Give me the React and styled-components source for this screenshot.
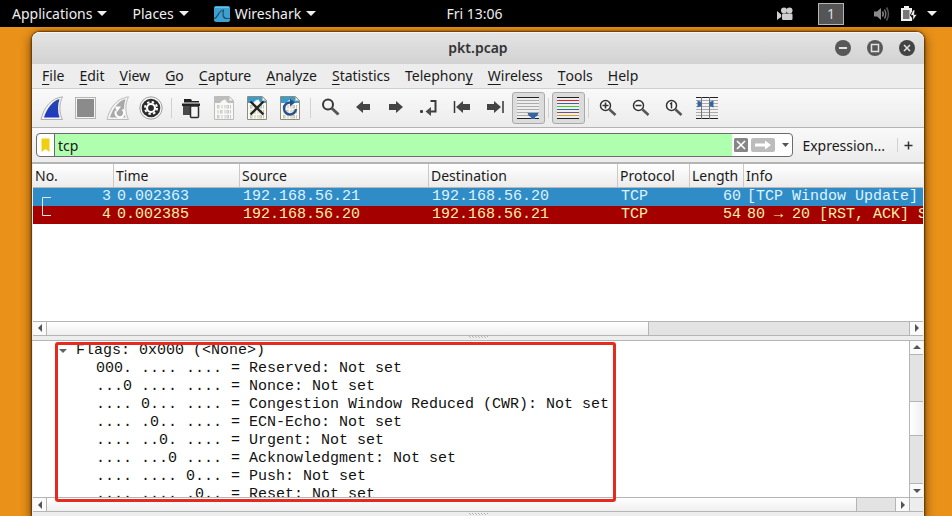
import React from "react";
import styled, { createGlobalStyle, css } from "styled-components";

const ui = `"Noto Sans", "Open Sans", sans-serif`;
const mono = `"Liberation Mono", monospace`;

const Global = createGlobalStyle`
  *, *::before, *::after { box-sizing: border-box; }
  body { margin: 0; background: #e99119; font-family: ${ui}; font-size: 14px; color: #1a1a1a; }
  button, input { font: inherit; color: inherit; }
`;

/* ---------- desktop ---------- */

const Desktop = styled.div`
  display: flex;
  flex-direction: column;
  height: 100vh;
  overflow: hidden;
`;

const PlainButton = styled.button.attrs({ type: "button" })`
  display: flex;
  align-items: center;
  justify-content: center;
  padding: 0;
  border: 0;
  background: none;
`;

const TopBar = styled.header`
  display: grid;
  grid-template-columns: 1fr auto 1fr;
  align-items: center;
  flex: none;
  height: 27px;
  padding: 0 15px 0 12px;
  background: #000;
  color: #eee;
  position: relative;
  z-index: 1;
`;

const TopMenus = styled.nav`
  display: flex;
  align-items: center;
  gap: 25px;
`;

const TopMenu = styled(PlainButton)`
  gap: 5px;
  line-height: 26px;
`;

const Clock = styled.time`
  line-height: 26px;
`;

const Tray = styled.div`
  display: flex;
  align-items: center;
  justify-content: flex-end;
`;

const Workspace = styled(PlainButton)`
  width: 26px;
  height: 22px;
  margin: 0 29px 0 24px;
  border: 1px solid #b4b4b4;
  background: #555;
  color: #ddd;
`;

const TrayIcon = styled.span`
  display: flex;
  margin-right: ${(p) => p.$gap || 0}px;
`;

/* ---------- window ---------- */

const Window = styled.main`
  display: flex;
  flex-direction: column;
  flex: 1;
  min-height: 0;
  margin: 5px 28px 0 32px;
  border-radius: 8px 8px 0 0;
  background: #ededed;
  box-shadow: 0 0 2px 1px rgba(50, 25, 0, 0.7), 0 3px 10px 2px rgba(70, 35, 0, 0.6);
`;

const TitleBar = styled.div`
  display: grid;
  grid-template-columns: 1fr auto 1fr;
  align-items: center;
  flex: none;
  height: 32px;
  padding: 0 9px;
  border-radius: 8px 8px 0 0;
  background: linear-gradient(#e4e4e4, #d2d2d2);
  box-shadow: inset 0 1px #f4f4f4;
`;

const Title = styled.h1`
  grid-column: 2;
  margin: 0;
  font-size: 14px;
  font-weight: 600;
  line-height: 30px;
  color: #333;
`;

const WindowButtons = styled.div`
  display: flex;
  justify-content: flex-end;
  gap: 16px;
`;

const MenuBar = styled.nav`
  display: flex;
  flex: none;
  height: 25px;
  padding: 0 3px;
  border-bottom: 1px solid #cfcfcf;
`;

const MenuItem = styled(PlainButton)`
  padding: 0 8px 0 7px;
  line-height: 24px;
`;

const Mnemonic = styled.span`
  text-decoration: underline;
  text-decoration-thickness: 1px;
  text-underline-offset: 3px;
`;

const ToolBar = styled.div`
  display: flex;
  align-items: center;
  flex: none;
  height: 38px;
  padding: 0 4px 0;
  background: linear-gradient(#f9f9f9, #ececec);
`;

const ToolButton = styled(PlainButton)`
  width: 33px;
  height: 32px;
  ${(p) =>
    p.$pressed &&
    css`
      border: 1px solid #aaa;
      border-radius: 3px;
      background: #dcdcdc;
    `}
`;

const Separator = styled.span`
  flex: none;
  width: 1px;
  height: ${(p) => p.$tall || 20}px;
  margin: 0 3px;
  background: #d2d2d2;
`;

const FilterBar = styled.form`
  display: flex;
  align-items: center;
  flex: none;
  height: 37px;
  padding: 0 9px 0 4px;
  border-top: 1px solid #b4b4b4;
  border-bottom: 2px solid #b4b4b4;
  background: linear-gradient(#f9f9f9, #ececec);
`;

const FilterBox = styled.div`
  display: flex;
  flex: 1;
  height: 24px;
  border: 1px solid #6c6c6c;
  border-radius: 4px;
  background: #fff;
  overflow: hidden;
`;

const Bookmark = styled(PlainButton)`
  width: 18px;
  border-right: 1px solid #6c6c6c;
`;

const FilterInput = styled.input`
  flex: 1;
  min-width: 0;
  padding: 0 3px;
  border: 0;
  outline: 0;
  background: #afffaf;
`;

const FilterActions = styled.div`
  display: flex;
  align-items: center;
  gap: 3px;
  padding-left: 2px;
`;

const CaretButton = styled(PlainButton)`
  width: 14px;
  height: 16px;
`;

const Expression = styled(PlainButton)`
  padding: 0 9px;
`;

/* ---------- packet list ---------- */

const Pane = styled.section`
  display: flex;
  flex-direction: column;
  flex: 1 1 0;
  min-height: 0;
  margin: 0 1px;
  background: #fff;
  position: relative;
`;

const TableArea = styled.div`
  flex: 1;
  min-height: 0;
  overflow: hidden;
`;

const PacketTable = styled.table`
  width: 100%;
  table-layout: fixed;
  border-collapse: separate;
  border-spacing: 0;
`;

const Col = styled.col`
  width: ${(p) => (p.$width ? `${p.$width}px` : "auto")};
`;

const HeadCell = styled.th`
  height: 24px;
  padding: 0 2px;
  border-bottom: 1px solid #b9b9b9;
  background: linear-gradient(#fff, #ececec);
  box-shadow: ${(p) => (p.$last ? "none" : "inset -1px 0 #c9c9c9")};
  font-weight: 400;
  line-height: 22px;
  text-align: left;
  white-space: nowrap;
`;

const PacketRow = styled.tr`
  background: ${(p) => (p.$selected ? "#308cc6" : "#a40000")};
  color: ${(p) => (p.$selected ? "#dff4ff" : "#fbf0a8")};
`;

const Cell = styled.td`
  height: 18px;
  padding: 0 3px;
  font: 15px/18px ${mono};
  text-align: ${(p) => (p.$right ? "right" : "left")};
  white-space: nowrap;
  overflow: hidden;
`;

const NumberBox = styled.div`
  display: flex;
  justify-content: space-between;
  height: 18px;
  padding-left: 6px;
`;

/* ---------- scroll bars and splitters ---------- */

const ScrollRow = styled.div`
  display: flex;
  flex: none;
  flex-direction: ${(p) => (p.$vertical ? "column" : "row")};
  ${(p) =>
    p.$vertical
      ? css`
          width: 14px;
          border-left: 1px solid #b5b5b5;
        `
      : css`
          height: 15px;
          border-top: 1px solid #b5b5b5;
          border-bottom: 1px solid #b5b5b5;
        `}
`;

const ScrollButton = styled(PlainButton)`
  flex: none;
  width: 13px;
  height: 13px;
  background: #fafafa;
`;

const Track = styled.div`
  flex: ${(p) => p.$size} 1 0;
  background: #e3e3e3;
`;

const Thumb = styled.div`
  flex: ${(p) => p.$size} 1 0;
  border: 0 solid #b5b5b5;
  border-width: ${(p) => (p.$vertical ? "1px 0" : "0 1px")};
  background: linear-gradient(${(p) => (p.$vertical ? "to right" : "to bottom")}, #fff, #efefef);
`;

const Rule = styled.div`
  flex: none;
  background: #b5b5b5;
  ${(p) => (p.$vertical ? "height: 1px;" : "width: 1px;")}
`;

const Corner = styled.div`
  flex: none;
  width: 13px;
  background: #ededed;
`;

const Splitter = styled.div`
  display: flex;
  align-items: center;
  justify-content: center;
  flex: none;
  height: ${(p) => p.$height}px;
  background: #ededed;
  ${(p) => p.$line && "border-bottom: 1px solid #b5b5b5;"}
`;

/* ---------- details ---------- */

const DetailsBody = styled.div`
  display: flex;
  flex: 1;
  min-height: 0;
`;

const Tree = styled.ul`
  flex: 1;
  min-height: 0;
  margin: 0;
  padding: 1px 0 0 25px;
  overflow: hidden;
  list-style: none;
  font: 15px/18px ${mono};
  color: #111;
`;

const TreeRow = styled.li`
  display: flex;
  align-items: center;
  height: 18px;
  padding-left: ${(p) => (p.$child ? 38 : 0)}px;
  white-space: pre;
`;

const Disclosure = styled(PlainButton)`
  width: 10px;
  height: 18px;
  margin-right: 8px;
`;

const Highlight = styled.div`
  position: absolute;
  top: 1px;
  bottom: 10px;
  left: 22px;
  width: 561px;
  border: 3px solid #e62a1f;
  border-radius: 3px;
  pointer-events: none;
`;

/* ---------- drawings ---------- */

const Caret = ({ w = 9, h = 5, fill = "#eee", dir = "down" }) => {
  const d = {
    down: `M0 0H${w}L${w / 2} ${h}Z`,
    up: `M0 ${h}H${w}L${w / 2} 0Z`,
    left: `M${w} 0V${h}L0 ${h / 2}Z`,
    right: `M0 0V${h}L${w} ${h / 2}Z`,
  }[dir];
  return (
    <svg width={w} height={h} aria-hidden="true">
      <path d={d} fill={fill} />
    </svg>
  );
};

const Svg = ({ children, w = 25, h = 25 }) => (
  <svg width={w} height={h} viewBox={`0 0 ${w} ${h}`} fill="none" aria-hidden="true">
    {children}
  </svg>
);

const WiresharkLogo = () => (
  <Svg w={16} h={16}>
    <rect width="16" height="16" rx="2" fill="#3fa0d0" />
    <path d="M0 12.500C4 12.500 4 4.500 9.500 4C8.500 8 8.500 12.500 13 12.500H16" stroke="#17506f" strokeWidth="1.200" />
    <path d="M1 1.500H15" stroke="#6cbfe4" />
  </Svg>
);

const Camera = () => (
  <Svg w={17} h={14}>
    <g fill="#cfcfcf">
      <circle cx="7" cy="3.500" r="3" />
      <circle cx="12.500" cy="3.500" r="3" />
      <rect x="5" y="6.500" width="10.500" height="6.500" rx="1.200" />
      <path d="M0 4L4.200 7.500V10L0 13Z" />
    </g>
  </Svg>
);

const Speaker = () => (
  <Svg w={17} h={16}>
    <path d="M1 5.500H4L8 2V14L4 10.500H1Z" fill="#8b8b8b" />
    <path d="M9.500 5.500Q11 8 9.500 10.500" stroke="#8b8b8b" strokeWidth="1.500" />
    <path d="M11.500 3.500Q14 8 11.500 12.500" stroke="#777" strokeWidth="1.500" />
    <path d="M13.500 1.500Q17.500 8 13.500 14.500" stroke="#555" strokeWidth="1.500" />
  </Svg>
);

const Battery = () => (
  <Svg w={17} h={16}>
    <path d="M3 0H8V2H11V6L9 9L11 12V15H0V2H3Z" fill="#f2f2f2" />
    <rect x="2" y="4" width="6.500" height="9" fill="#777" />
    <path d="M12 4L9.500 9.500H12L11.500 15L16 8.500H13.200L14 4Z" fill="#f2f2f2" stroke="#000" strokeWidth=".6" />
  </Svg>
);

const RoundIcon = ({ kind }) => (
  <Svg w={16} h={16}>
    <circle cx="8" cy="8" r="8" fill={kind === "close" ? "#444" : "#585858"} />
    {kind === "min" && <path d="M4 8H12" stroke="#e4e4e4" strokeWidth="2" />}
    {kind === "max" && <rect x="4.500" y="4.500" width="7" height="7" stroke="#e4e4e4" strokeWidth="1.500" />}
    {kind === "close" && <path d="M5 5L11 11M11 5L5 11" stroke="#e4e4e4" strokeWidth="1.500" />}
  </Svg>
);

const fin = "M1 23.500C4 11 11 2.500 22.500 .8C19 8 19 17 22.500 23.500Z";
const finInner = "M4 21.500C7 12 12 5.500 19.500 3C17.500 9 17.500 16 19.500 21.500Z";

const Fin = () => (
  <Svg>
    <defs>
      <linearGradient id="finBlue" x1="0" y1="0" x2="0" y2="1">
        <stop offset="0" stopColor="#2449a8" />
        <stop offset="1" stopColor="#2038c4" />
      </linearGradient>
    </defs>
    <path d={fin} fill="#f4f4f4" stroke="#b0b0b0" />
    <path d={finInner} fill="url(#finBlue)" />
  </Svg>
);

const Stop = () => (
  <Svg>
    <rect x="2.500" y="1.500" width="20" height="21" fill="#f4f4f4" stroke="#b4b4b4" />
    <rect x="4" y="3" width="17" height="18" fill="#8b8b8b" />
  </Svg>
);

const Restart = () => (
  <Svg>
    <path d={fin} fill="#f4f4f4" stroke="#bcbcbc" />
    <path d={finInner} fill="#a9a9a9" />
    <path d="M10 15A4.300 4.300 0 1 0 16.500 13.500" stroke="#fff" strokeWidth="2.200" />
    <path d="M9 10.500L15 10.500L11 16Z" fill="#fff" />
  </Svg>
);

const Options = () => (
  <Svg>
    <circle cx="12" cy="12" r="11.200" fill="#f6f6f6" stroke="#a0a0a0" />
    <circle cx="12" cy="12" r="9.300" fill="#2b2b2b" />
    <circle cx="12" cy="12" r="4" stroke="#fff" strokeWidth="2.200" />
    <circle cx="12" cy="12" r="6" stroke="#fff" strokeWidth="2" strokeDasharray="2.400 2.310" />
  </Svg>
);

const Folder = () => (
  <Svg>
    <path d="M5 3H12L13 5H20V6.500H5Z" fill="#222" />
    <path d="M3 7.500H21V10H3Z" fill="#222" />
    <path d="M4 10H20V19H4Z" fill="#4a4a4a" />
    <rect x="11.500" y="10" width="8" height="11.500" rx="1" fill="#f4f4f4" stroke="#2b2b2b" strokeWidth="1.500" />
  </Svg>
);

const Digits = ({ color }) => (
  <g stroke={color} strokeWidth="1">
    {[9, 14, 19].map((y, i) => (
      <g key={y}>
        <rect x={5.5 + (i % 2) * 3} y={y + 0.5} width="1.500" height="2.500" />
        <path d={`M${i % 2 ? 6 : 10} ${y}V${y + 3.5}M13 ${y}V${y + 3.5}M18.500 ${y}V${y + 3.5}`} />
        <rect x="15" y={y + 0.5} width="1.500" height="2.500" />
      </g>
    ))}
  </g>
);

const Page = ({ top, edge, digits, children }) => (
  <Svg>
    <path d="M2.500 .5H17.500L21.500 4.500V23.500H2.500Z" fill="#f8f8f4" stroke={edge} />
    <path d="M3 1H17V5H21V7H16C14 6 14 4 13.500 3.500C10 4 9.500 6 8 7H3Z" fill={top} />
    <path d="M17.500 1V4.500H21Z" fill="#fff" stroke={edge} strokeWidth=".6" />
    <Digits color={digits} />
    {children}
  </Svg>
);

const SavePage = () => <Page top="#bdbdbd" edge="#bcbcbc" digits="#c8c8c8" />;
const ClosePage = () => (
  <Page top="#3b9bcb" edge="#8d8d7c" digits="#c4c4ae">
    <path d="M5.500 5.500L18.500 18.500M18.500 5.500L5.500 18.500" stroke="#252525" strokeWidth="2.400" />
  </Page>
);
const ReloadPage = () => (
  <Page top="#3b9bcb" edge="#8d8d7c" digits="#c4c4ae">
    <path d="M14 6.500H12A6 6 0 1 0 18 13" stroke="#26508f" strokeWidth="2.400" />
    <path d="M12 2.500L17 6.500L12 10.500Z" fill="#26508f" />
  </Page>
);

const Find = () => (
  <Svg>
    <circle cx="10" cy="8.500" r="5" stroke="#383838" strokeWidth="2" />
    <path d="M13.500 12L20.500 18.500" stroke="#555" strokeWidth="3" />
  </Svg>
);

const arrowLeft = "M5 11L12 5V8H19V14H12V17Z";
const arrowRight = "M19 11L12 5V8H5V14H12V17Z";

const Back = () => <Svg><path d={arrowLeft} fill="#444" /></Svg>;
const Forward = () => <Svg><path d={arrowRight} fill="#444" /></Svg>;
const GoTo = () => (
  <Svg>
    <path d="M13.500 5H18.500V15.500H13" stroke="#3c3c3c" strokeWidth="2" />
    <path d="M8.500 15.500L14 11V20Z" fill="#4a4a4a" />
    <rect x="3" y="14" width="3" height="3" rx="1" fill="#3c3c3c" />
  </Svg>
);
const First = () => (
  <Svg>
    <path d={arrowLeft} fill="#444" transform="translate(1 0)" />
    <path d="M4.500 5V17" stroke="#333" strokeWidth="1.500" />
  </Svg>
);
const Last = () => (
  <Svg>
    <path d={arrowRight} fill="#444" transform="translate(-1 0)" />
    <path d="M20 5V17" stroke="#333" strokeWidth="1.500" />
  </Svg>
);

const Lines = ({ colors }) =>
  colors.map((c, i) => <path key={i} d={`M1 ${i * 3 + 1.5}H23`} stroke={c} />);

const AutoScroll = () => (
  <Svg>
    <rect x="1" y="1" width="22" height="22" fill="#eee" />
    <Lines colors={["#222", "#aaa", "#aaa", "#aaa", "#aaa", "#aaa", "#aaa", "#222"]} />
    <path d="M11.500 17H22.500Q22 20 19 21V23H15V21Q12 20 11.500 17Z" fill="#3465a4" />
  </Svg>
);
const Colorize = () => (
  <Svg>
    <rect x="1" y="1" width="22" height="22" fill="#eee" />
    <Lines colors={["#222", "#e02020", "#3465a4", "#4fc51a", "#3465a4", "#75507b", "#d3a017", "#222"]} />
  </Svg>
);
const Zoom = ({ kind }) => (
  <Svg>
    <circle cx="9.500" cy="9.500" r="5" fill="#fff" stroke="#333" strokeWidth="1.500" />
    <path d="M13.500 13.500L19.500 19" stroke="#555" strokeWidth="2.500" />
    {kind === "in" && <path d="M6.500 9.500H12.500M9.500 6.500V12.500" stroke="#333" strokeWidth="1.600" />}
    {kind === "out" && <path d="M6.500 9.500H12.500" stroke="#333" strokeWidth="1.600" />}
    {kind === "one" && <path d="M8 8L9.500 7V12.500" stroke="#333" strokeWidth="1.500" />}
  </Svg>
);
const ResizeColumns = () => (
  <Svg>
    <Lines colors={["#222", "#aaa", "#aaa", "#aaa", "#aaa", "#aaa", "#aaa", "#222"]} />
    <path d="M6.500 1V23M14.500 1V23" stroke="#777" />
    <path d="M2.500 4.500L6.500 6V10L2.500 11.500ZM18.500 4.500L14.500 6V10L18.500 11.500Z" fill="#3465a4" />
  </Svg>
);

const BookmarkIcon = () => (
  <Svg w={9} h={15}>
    <path d="M.5 .5H8.500V14L4.500 11L.5 14Z" fill="#efcf10" />
  </Svg>
);
const ClearIcon = () => (
  <Svg w={14} h={14}>
    <rect width="14" height="14" rx="1.500" fill="#868686" />
    <path d="M3 3L11 11M11 3L3 11" stroke="#fff" strokeWidth="1.600" />
  </Svg>
);
const ApplyIcon = () => (
  <Svg w={24} h={14}>
    <rect width="24" height="14" rx="2" fill="#bcbcbc" />
    <path d="M4 5.500H14V2.500L20 7L14 11.500V8.500H4Z" fill="#fff" />
  </Svg>
);
const PlusIcon = () => (
  <Svg w={9} h={9}>
    <path d="M4.500 .5V8.500M.5 4.500H8.500" stroke="#333" strokeWidth="1.500" />
  </Svg>
);
const Grip = () => (
  <Svg w={20} h={3}>
    <path d="M1 .5H20" stroke="#b0b0b0" strokeDasharray="1 2" />
    <path d="M2 1.500H20" stroke="#bdbdbd" strokeDasharray="1 2" />
  </Svg>
);
const Bracket = ({ end }) => (
  <Svg w={9} h={18}>
    <path d={end ? "M.5 0V9.500H9" : "M9 9.500H.5V18"} stroke="#dfe8ee" />
  </Svg>
);

/* ---------- data ---------- */

const menus = ["File", "Edit", "View", "Go", "Capture", "Analyze", "Statistics", "Telephony", "Wireless", "Tools", "Help"];

const tools = [
  ["Start capture", <Fin />],
  ["Stop capture", <Stop />],
  ["Restart capture", <Restart />],
  ["Capture options", <Options />],
  null,
  ["Open file", <Folder />],
  ["Save file", <SavePage />],
  ["Close file", <ClosePage />],
  ["Reload file", <ReloadPage />],
  null,
  ["Find packet", <Find />],
  ["Previous packet", <Back />],
  ["Next packet", <Forward />],
  ["Go to packet", <GoTo />],
  ["First packet", <First />],
  ["Last packet", <Last />],
  ["Auto scroll", <AutoScroll />, true],
  null,
  ["Colorize", <Colorize />, true],
  null,
  ["Zoom in", <Zoom kind="in" />],
  ["Zoom out", <Zoom kind="out" />],
  ["Normal size", <Zoom kind="one" />],
  ["Resize columns", <ResizeColumns />],
];

const columns = [
  ["No.", 81],
  ["Time", 126],
  ["Source", 189],
  ["Destination", 189],
  ["Protocol", 72],
  ["Length", 54],
  ["Info", 0],
];

const packets = [
  { no: 3, time: "0.002363", src: "192.168.56.21", dst: "192.168.56.20", proto: "TCP", len: 60, info: "[TCP Window Update]", selected: true },
  { no: 4, time: "0.002385", src: "192.168.56.20", dst: "192.168.56.21", proto: "TCP", len: 54, info: "80 → 20 [RST, ACK] S" },
];

const flags = [
  "000. .... .... = Reserved: Not set",
  "...0 .... .... = Nonce: Not set",
  ".... 0... .... = Congestion Window Reduced (CWR): Not set",
  ".... .0.. .... = ECN-Echo: Not set",
  ".... ..0. .... = Urgent: Not set",
  ".... ...0 .... = Acknowledgment: Not set",
  ".... .... 0... = Push: Not set",
  ".... .... .0.. = Reset: Not set",
];

/* ---------- composition ---------- */

const HorizontalScroll = ({ thumb, rest, corner }) => (
  <ScrollRow>
    <ScrollButton aria-label="Scroll left"><Caret w={4} h={8} dir="left" fill="#555" /></ScrollButton>
    <Thumb $size={thumb} />
    <Track $size={rest} />
    <Rule />
    <ScrollButton aria-label="Scroll right"><Caret w={4} h={8} dir="right" fill="#555" /></ScrollButton>
    {corner && <Rule />}
    {corner && <Corner />}
  </ScrollRow>
);

const VerticalScroll = () => (
  <ScrollRow $vertical>
    <ScrollButton aria-label="Scroll up"><Caret w={8} h={4} dir="up" fill="#555" /></ScrollButton>
    <Rule $vertical />
    <Track $size={47} />
    <Thumb $vertical $size={33} />
    <Track $size={47} />
    <Rule $vertical />
    <ScrollButton aria-label="Scroll down"><Caret w={8} h={4} dir="down" fill="#555" /></ScrollButton>
  </ScrollRow>
);

export default function App() {
  return (
    <Desktop>
      <Global />
      <TopBar>
        <TopMenus>
          <TopMenu>Applications <Caret w={10} /></TopMenu>
          <TopMenu>Places <Caret w={10} /></TopMenu>
          <TopMenu><WiresharkLogo /> Wireshark <Caret w={10} /></TopMenu>
        </TopMenus>
        <Clock>Fri 13:06</Clock>
        <Tray>
          <Camera />
          <Workspace>1</Workspace>
          <TrayIcon $gap={11}><Speaker /></TrayIcon>
          <TrayIcon $gap={9}><Battery /></TrayIcon>
          <Caret w={10} />
        </Tray>
      </TopBar>

      <Window>
        <TitleBar>
          <Title>pkt.pcap</Title>
          <WindowButtons>
            <PlainButton aria-label="Minimize"><RoundIcon kind="min" /></PlainButton>
            <PlainButton aria-label="Maximize"><RoundIcon kind="max" /></PlainButton>
            <PlainButton aria-label="Close"><RoundIcon kind="close" /></PlainButton>
          </WindowButtons>
        </TitleBar>

        <MenuBar>
          {menus.map((m) => (
            <MenuItem key={m}>
              {m === "Telephony" ? <>Telephon<Mnemonic>y</Mnemonic></> : <><Mnemonic>{m[0]}</Mnemonic>{m.slice(1)}</>}
            </MenuItem>
          ))}
        </MenuBar>

        <ToolBar>
          {tools.map((t, i) =>
            t ? (
              <ToolButton key={i} aria-label={t[0]} $pressed={t[2]}>{t[1]}</ToolButton>
            ) : (
              <Separator key={i} />
            )
          )}
        </ToolBar>

        <FilterBar onSubmit={(e) => e.preventDefault()}>
          <FilterBox>
            <Bookmark aria-label="Filter bookmarks"><BookmarkIcon /></Bookmark>
            <FilterInput aria-label="Display filter" defaultValue="tcp" />
            <FilterActions>
              <PlainButton aria-label="Clear filter"><ClearIcon /></PlainButton>
              <PlainButton aria-label="Apply filter"><ApplyIcon /></PlainButton>
              <CaretButton aria-label="Recent filters"><Caret w={7} h={4} fill="#555" /></CaretButton>
            </FilterActions>
          </FilterBox>
          <Expression>Expression...</Expression>
          <Separator $tall={14} />
          <CaretButton aria-label="Add filter button"><PlusIcon /></CaretButton>
        </FilterBar>

        <Pane>
          <TableArea>
            <PacketTable>
              <colgroup>
                {columns.map(([name, width]) => <Col key={name} $width={width} />)}
              </colgroup>
              <thead>
                <tr>
                  {columns.map(([name, width]) => <HeadCell key={name} $last={!width}>{name}</HeadCell>)}
                </tr>
              </thead>
              <tbody>
                {packets.map((p, i) => (
                  <PacketRow key={p.no} $selected={p.selected}>
                    <Cell><NumberBox><Bracket end={i === 1} />{p.no}</NumberBox></Cell>
                    <Cell>{p.time}</Cell>
                    <Cell>{p.src}</Cell>
                    <Cell>{p.dst}</Cell>
                    <Cell>{p.proto}</Cell>
                    <Cell $right>{p.len}</Cell>
                    <Cell>{p.info}</Cell>
                  </PacketRow>
                ))}
              </tbody>
            </PacketTable>
          </TableArea>
          <HorizontalScroll thumb={602} rest={260} />
        </Pane>

        <Splitter $height={5} $line><Grip /></Splitter>

        <Pane>
          <DetailsBody>
            <Tree>
              <TreeRow>
                <Disclosure aria-label="Collapse flags"><Caret w={8} h={4} fill="#5a6468" /></Disclosure>
                {"Flags: 0x000 (<None>)"}
              </TreeRow>
              {flags.map((f) => <TreeRow key={f} $child>{f}</TreeRow>)}
            </Tree>
            <VerticalScroll />
          </DetailsBody>
          <HorizontalScroll thumb={812} rest={38} corner />
          <Highlight />
        </Pane>

        <Splitter $height={4}><Grip /></Splitter>
      </Window>
    </Desktop>
  );
}
